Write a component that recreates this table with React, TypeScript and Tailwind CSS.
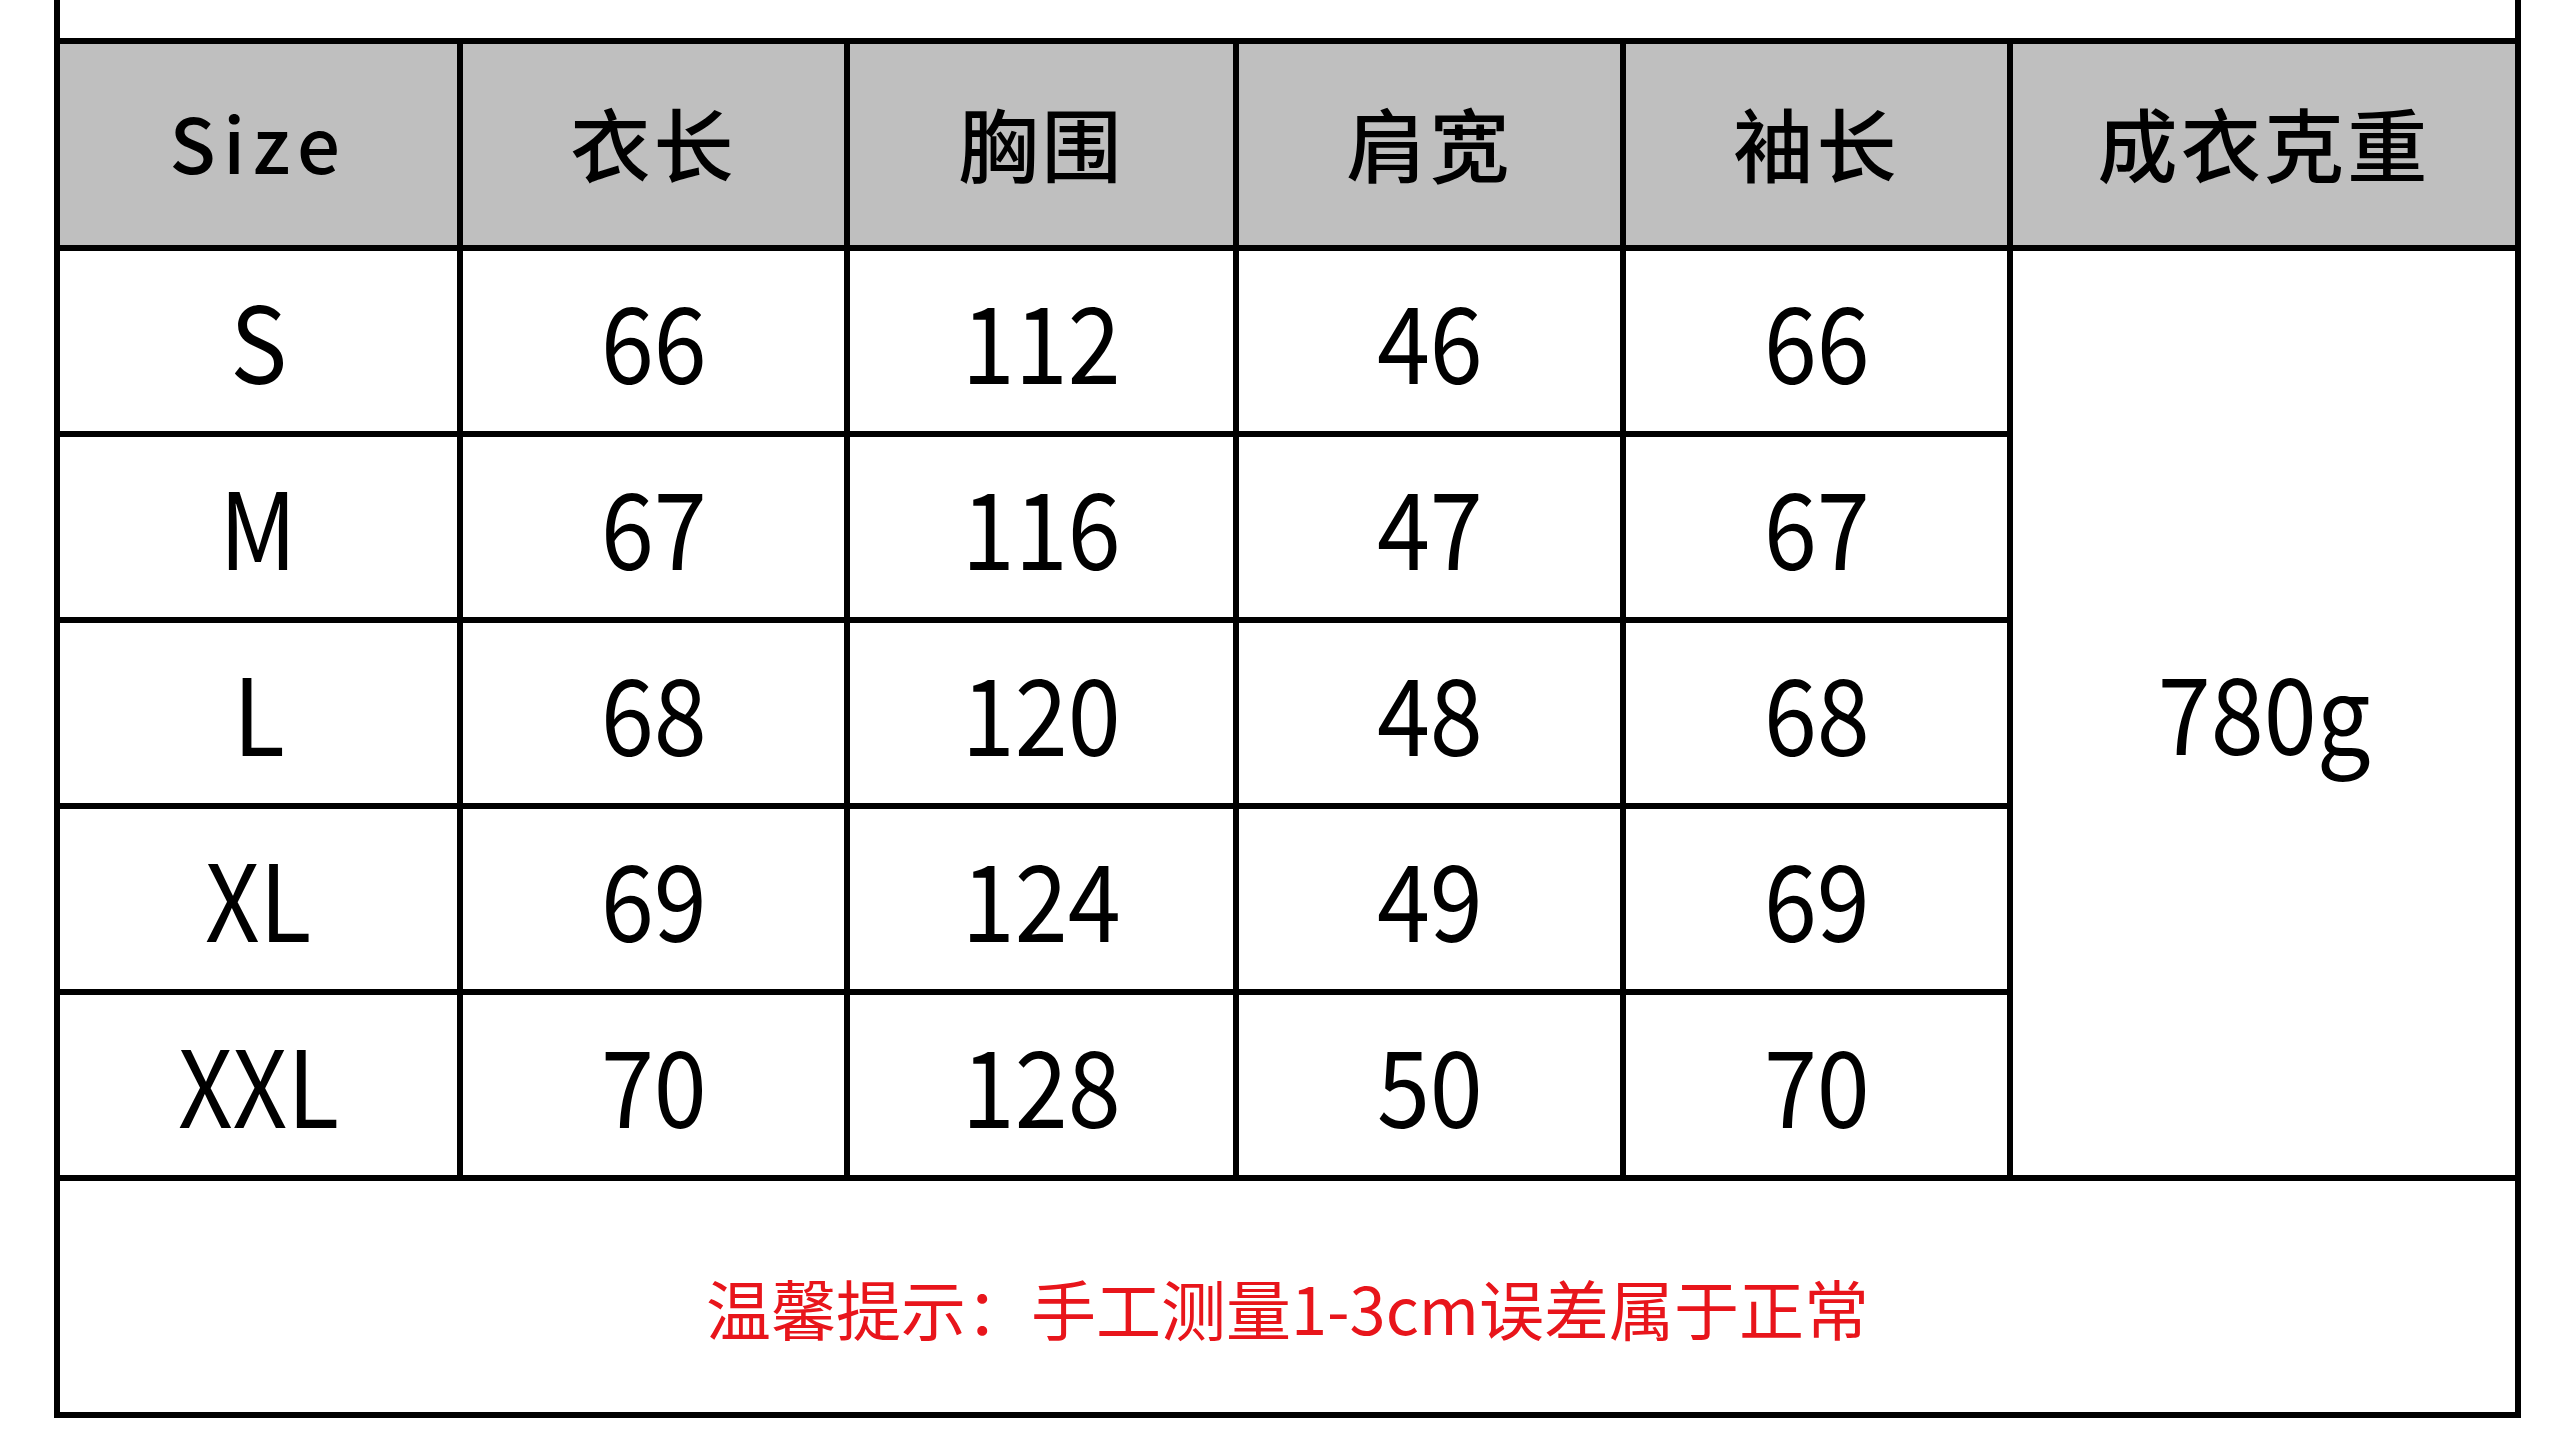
const headers = ["Size", "衣长", "胸围", "肩宽", "袖长", "成衣克重"];

const rows = [
  ["S", "66", "112", "46", "66"],
  ["M", "67", "116", "47", "67"],
  ["L", "68", "120", "48", "68"],
  ["XL", "69", "124", "49", "69"],
  ["XXL", "70", "128", "50", "70"],
];

export default function App() {
  return (
    <div className="min-h-screen bg-white font-['Noto_Sans_CJK_SC',sans-serif] text-black">
      <div className="ml-[54px] w-[2467px] border-x-[6px] border-b-[6px] border-black">
        {/* cropped area above the table */}
        <div className="h-[38px]" />

        <div className="grid grid-cols-[397px_381px_383px_381px_381px_502px] grid-rows-[201px_repeat(5,180px)_231px] gap-[6px] border-t-[6px] border-black bg-black">
          {headers.map((h) => (
            <div
              key={h}
              className={
                "flex items-center justify-center bg-[#bfbfbf] pb-[8px] font-medium leading-none " +
                (h === "Size" ? "text-[76px] tracking-[0.1em]" : "text-[80px] tracking-[0.04em]")
              }
            >
              {h}
            </div>
          ))}

          {rows.map((r, i) => (
            <>
              {r.map((c, j) => (
                <div
                  key={`${i}-${j}`}
                  className="flex items-center justify-center bg-white pb-[6px] text-[106px] leading-none"
                >
                  <span className="inline-block scale-x-90">{c}</span>
                </div>
              ))}
              {i === 0 && (
                <div className="row-span-5 flex items-center justify-center bg-white pb-[8px] text-[106px] leading-none">
                  <span className="inline-block scale-x-90">780g</span>
                </div>
              )}
            </>
          ))}

          {/* footer note */}
          <div className="col-span-6 flex items-center justify-center bg-white pt-[22px] text-[65px] leading-none text-[#e8151b]">
            温馨提示：手工测量1-3cm误差属于正常
          </div>
        </div>
      </div>
    </div>
  );
}
